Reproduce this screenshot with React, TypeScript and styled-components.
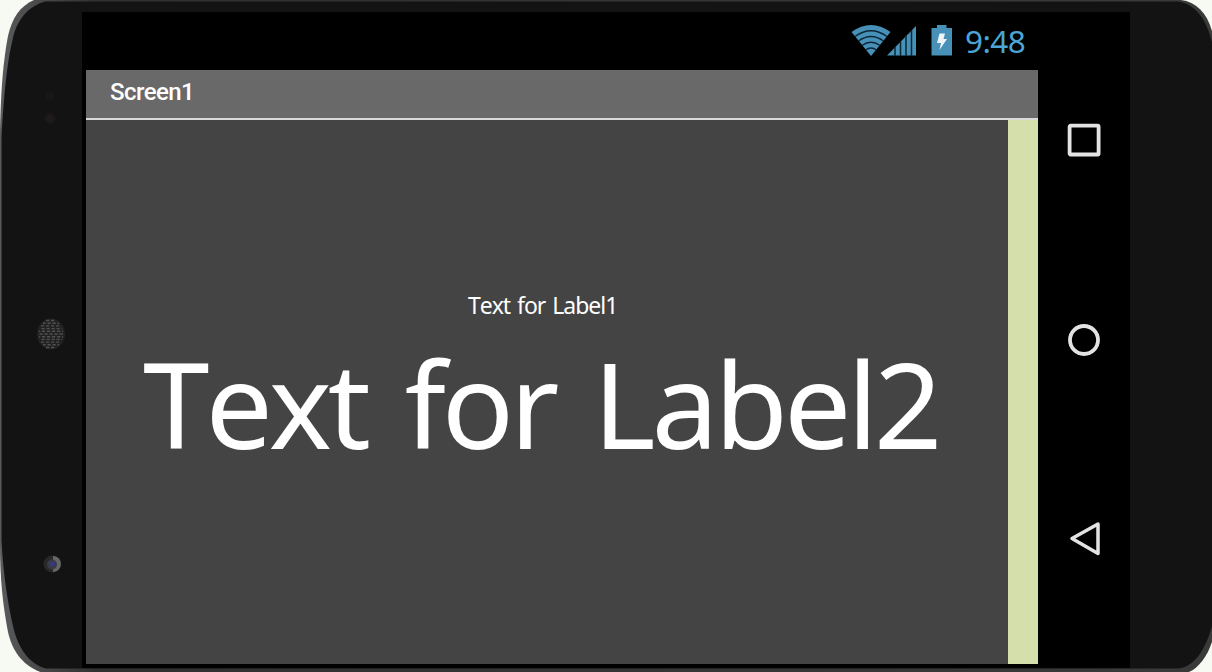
import React from 'react';
import styled, { createGlobalStyle } from 'styled-components';

const GlobalStyle = createGlobalStyle`
    body {
        margin: 0;
        background: #f7faf3;
        overflow: hidden;
    }
`;

const Device = styled.div`
    position: relative;
    box-sizing: border-box;
    width: 1212px;
    height: 672px;
    padding: 12px 82px 4px 0;
    display: flex;
    overflow: hidden;
`;

// the body of the phone lies behind everything else
const Shell = styled.svg`
    position: absolute;
    top: 0;
    left: 0;
    z-index: -1;
`;

const Bezel = styled.div`
    box-sizing: border-box;
    display: flex;
    flex-direction: column;
    width: 82px;
    padding-top: 78px;
    padding-left: 36px;
`;

const Sensors = styled.svg`
    height: 40px;
    width: 30px;
`;

const Speaker = styled(Sensors)`
    margin-top: 187px;
    height: 34px;
`;

const Camera = styled(Sensors)`
    margin-top: 203px;
    height: 20px;
`;

const Display = styled.div`
    display: flex;
    width: 1048px;
    background: #000;
`;

const Screen = styled.div`
    display: flex;
    flex-direction: column;
    width: 952px;
    padding: 0 0 4px 4px;
`;

const StatusBar = styled.div`
    box-sizing: border-box;
    display: flex;
    justify-content: flex-end;
    height: 58px;
    padding: 11px 12px 0 0;
`;

const Clock = styled.span`
    width: 61px;
    margin-left: 12px;
    color: #4ba6d6;
    font-family: 'Noto Sans', sans-serif;
    font-size: 31.5px;
    line-height: 35px;
    letter-spacing: -0.6px;
    white-space: nowrap;
`;

const TitleBar = styled.div`
    box-sizing: border-box;
    height: 50px;
    padding-left: 24px;
    background: #696969;
    border-bottom: 2px solid #d9d9d9;

    color: #fff;
    font-family: Roboto, sans-serif;
    font-size: 24px;
    font-weight: 500;
    line-height: 44px;
    letter-spacing: -0.55px;
`;

const Content = styled.div`
    display: flex;
    flex: 1;
    background: #444;
`;

const Labels = styled.div`
    display: flex;
    flex-direction: column;
    align-items: flex-start;
    flex: 1;
    padding-top: 168px;
`;

const Label = styled.div<{ $size: number; $line: number; $indent: number; $tracking: number }>`
    margin-left: ${p => p.$indent}px;
    color: #fff;
    font-family: 'Noto Sans', sans-serif;
    font-size: ${p => p.$size}px;
    font-kerning: none;
    line-height: ${p => p.$line}px;
    letter-spacing: ${p => p.$tracking}em;
    word-spacing: 0.09em;
    white-space: nowrap;
`;

const SideStrip = styled.div`
    width: 30px;
    background: #d5dfab;
`;

const NavBar = styled.div`
    display: flex;
    flex-direction: column;
    justify-content: space-between;
    box-sizing: border-box;
    width: 92px;
    padding: 108px 0 109px 26px;
`;

const NavIcon = styled.svg`
    display: block;
    width: 40px;
    height: 40px;
    fill: none;
    stroke: #e3e3e3;
    stroke-width: 3.8;
    stroke-linejoin: round;
`;

const speakerRows = [5, 8, 10, 11, 12, 12, 12, 11, 10, 8, 5];

function PhoneShell() {
    return (
        <Shell width="1212" height="672" viewBox="0 0 1212 672">
            <defs>
                <linearGradient id="rim" x1="0" x2="1" y1="0" y2="0">
                    <stop offset="0" stopColor="#5a5a5c" />
                    <stop offset="0.08" stopColor="#303030" />
                    <stop offset="1" stopColor="#3a3a3a" />
                </linearGradient>
            </defs>
            <path
                d="M34 0H1181C1198 2 1210 16 1214 40V634C1210 654 1198 670 1186 673H43C22 666 12 650 8 632C3 606 0 580 0 545V130C1 90 3 62 8 36C12 18 20 6 34 0Z"
                fill="url(#rim)"
            />
            <path
                d="M46 1.500H1178C1195 4 1206 18 1212 42V626C1206 648 1195 667 1178 668.500H46C29 664 18 648 13 626C7 600 3 570 1.500 540V138C4 94 7 62 13 38C17 20 29 5 46 1.500Z"
                fill="#131313"
            />
        </Shell>
    );
}

export default function App() {
    return (
        <Device>
            <GlobalStyle />
            <PhoneShell />
            <Bezel>
                <Sensors viewBox="0 0 30 40">
                    <circle cx="14" cy="6" r="4" fill="#181818" />
                    <circle cx="14" cy="28.500" r="6" fill="#1a1717" />
                    <circle cx="14" cy="28.500" r="3.500" fill="#201b1a" />
                </Sensors>
                <Speaker viewBox="0 0 30 34">
                    <ellipse cx="15" cy="17" rx="14" ry="15.500" fill="#222" />
                    {speakerRows.map((half, i) => (
                        <path
                            key={i}
                            d={`M${15 - half} ${3.5 + i * 2.7}H${15 + half}`}
                            stroke="#505050"
                            strokeWidth="1.4"
                            strokeDasharray="3.2 1.8"
                            strokeDashoffset={half + (i % 2) * 2.5}
                        />
                    ))}
                </Speaker>
                <Camera viewBox="0 0 30 20">
                    <circle cx="16" cy="10" r="8.500" fill="#292929" />
                    <path d="M17 2A8 8 0 0 1 17 18Z" fill="#666" />
                    <circle cx="16" cy="10.500" r="5" fill="#3a3a48" />
                    <circle cx="16.500" cy="10" r="2.500" fill="#38387c" />
                </Camera>
            </Bezel>
            <Display>
                <Screen>
                    <StatusBar>
                        <svg width="102" height="36" viewBox="0 0 102 36" fill="#4790b8">
                            <path d="M.500 9Q20-5 39.500 9L20 33Z" />
                            <g fill="none" stroke="#0b2736" strokeWidth="1.500">
                                <path d="M4 13.500Q20 2 36 13.500M7.500 18Q20 9 32.500 18M11 22.500Q20 16 29 22.500M14.500 27Q20 23 25.500 27" />
                            </g>
                            <path d="M36 32.500L65 3V32.500Z" />
                            <path
                                d="M44 24V33M49.500 18V33M55 12V33M60.500 7V33"
                                stroke="#0b2736"
                                strokeWidth="1.500"
                            />
                            <path d="M80.500 5H86V2H95.500V5H101V32.500H80.500Z" />
                            <path d="M88.500 10.500H94L92.500 16H96L88.500 27L90 20H86Z" fill="#eef5f8" />
                        </svg>
                        <Clock>9:48</Clock>
                    </StatusBar>
                    <TitleBar>Screen1</TitleBar>
                    <Content>
                        <Labels>
                            <Label $size={23} $line={34} $indent={382} $tracking={-0.045}>Text for Label1</Label>
                            <Label $size={119.5} $line={161} $indent={57} $tracking={-0.034}>Text for Label2</Label>
                        </Labels>
                        <SideStrip />
                    </Content>
                </Screen>
                <NavBar>
                    <NavIcon viewBox="0 0 40 40">
                        <rect x="5.600" y="5.700" width="29" height="28.800" rx="1" />
                    </NavIcon>
                    <NavIcon viewBox="0 0 40 40">
                        <circle cx="20" cy="20" r="14" />
                    </NavIcon>
                    <NavIcon viewBox="0 0 40 40">
                        <path d="M34 5V34.500L8 19.500Z" strokeWidth="3.500" />
                    </NavIcon>
                </NavBar>
            </Display>
        </Device>
    );
}
